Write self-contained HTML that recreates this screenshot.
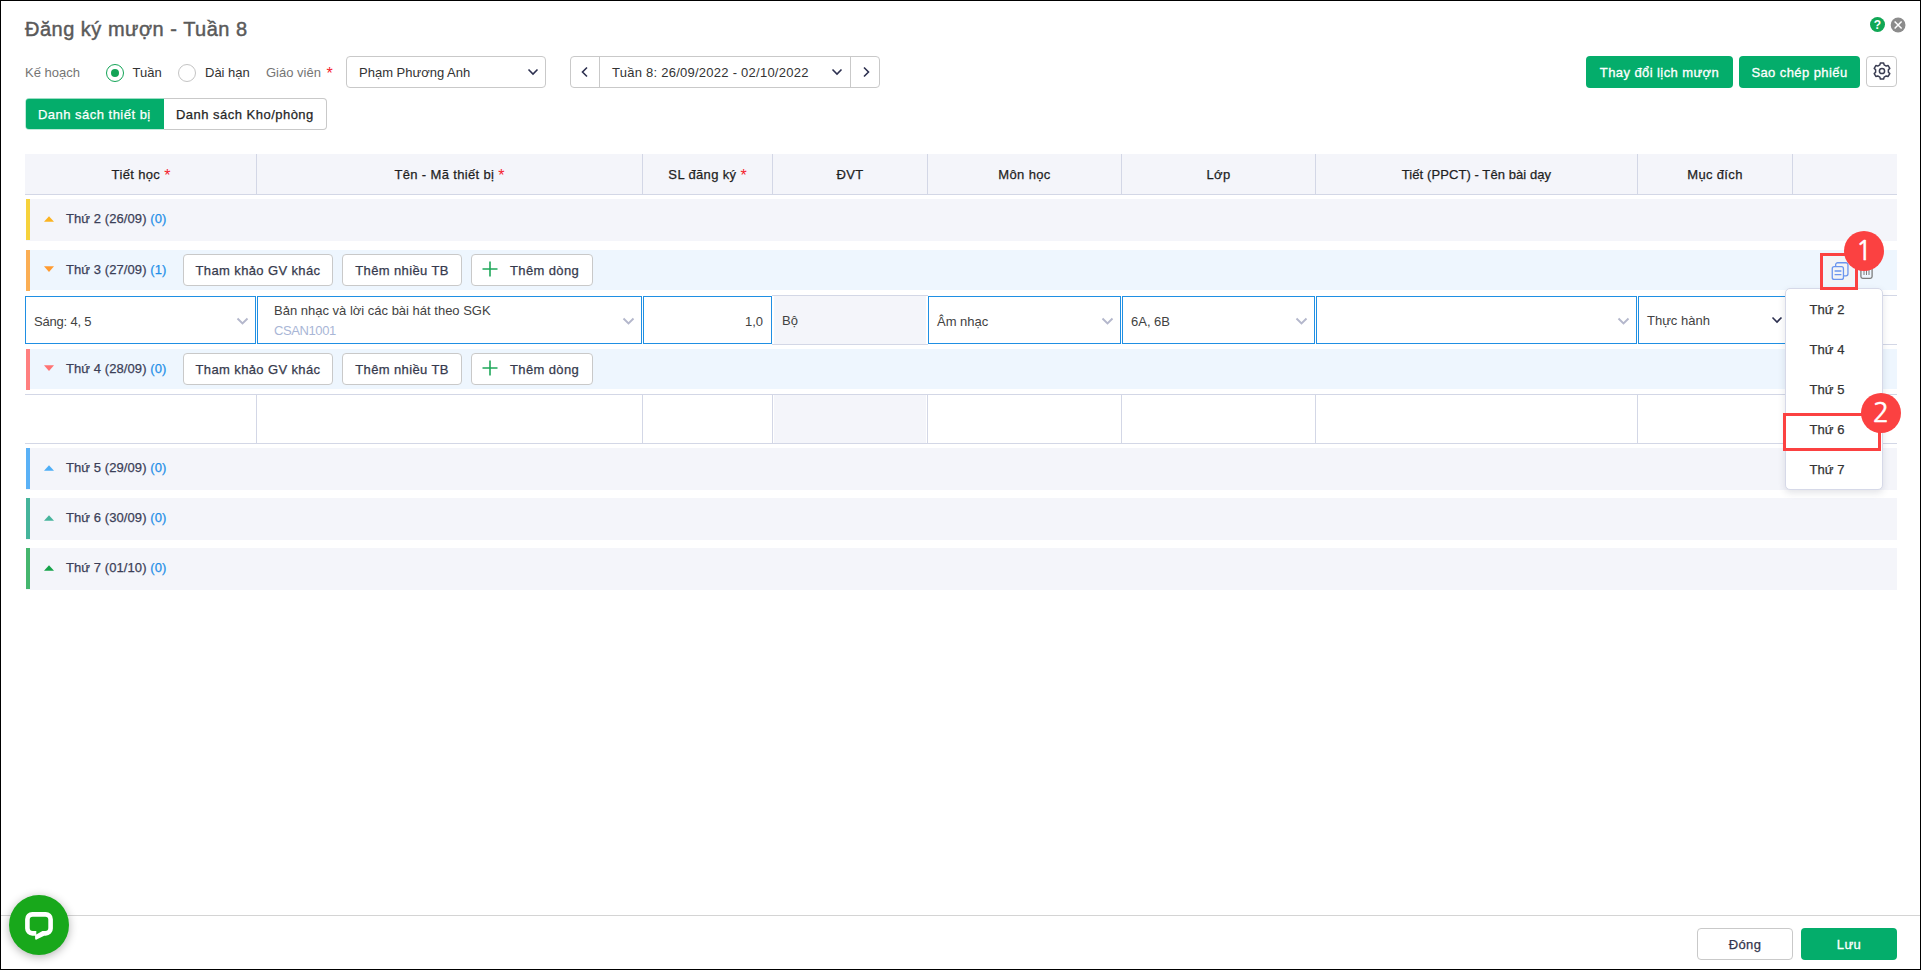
<!DOCTYPE html>
<html lang="vi">
<head>
<meta charset="utf-8">
<title>Đăng ký mượn - Tuần 8</title>
<style>
*{box-sizing:border-box;margin:0;padding:0}
html,body{width:1921px;height:970px;overflow:hidden;background:#fff}
body{position:relative;font-family:"Liberation Sans",sans-serif;font-size:13px;color:#333}
.a{position:absolute;white-space:nowrap}
.frame{left:0;top:0;width:1921px;height:970px;border:1px solid #000;z-index:50;pointer-events:none}
.b{font-weight:normal;-webkit-text-stroke:0.25px;letter-spacing:0.48px}
.g{color:#757575}
.red{color:#f5222d;font-size:16px;line-height:0;position:relative;top:2px;letter-spacing:0;-webkit-text-stroke:0}
.t{line-height:20px;height:20px}
.title{left:25px;top:17px;font-size:20px;line-height:24px;font-weight:normal;letter-spacing:0.5px;-webkit-text-stroke:0.45px #5a5a5a;color:#5a5a5a}
.box{border:1px solid #c9c9c9;border-radius:4px;background:#fff}
.gbtn{background:#04ad6b;border-radius:4px;color:#fff;font-weight:normal;-webkit-text-stroke:0.3px;letter-spacing:0.42px;text-align:center;height:32px;line-height:33px;top:56px}
.hd{top:154px;height:41px;background:#f4f5fa;border-bottom:1px solid #d3d7e6;left:25px;width:1872px}
.vl{width:1px;background:#d3d7e6}
.ht{top:165px;font-weight:normal;-webkit-text-stroke:0.25px;letter-spacing:0.35px;text-align:center;color:#1f1f1f}
.grp{left:26px;width:1871px;height:42px;background:#f4f5fa}
.grp.open{background:#eef6fe;height:40px}
.bar{left:0;top:0;width:4px;height:41px}
.gt{left:40px;top:10px;font-weight:normal;-webkit-text-stroke:0.25px;letter-spacing:0.08px;color:#3b3f58}
.gt i{font-style:normal;color:#1f8fe8}
.tri{left:18px;width:0;height:0;border-left:5px solid transparent;border-right:5px solid transparent}
.up{top:17px;border-bottom:5.5px solid #000}
.dn{top:17px;border-top:6px solid #000}
.wbtn{top:4px;height:32px;line-height:30px;padding-top:1px;border:1px solid #c9c9c9;border-radius:4px;background:#fff;font-weight:normal;-webkit-text-stroke:0.25px;letter-spacing:0.38px;color:#363a4d;text-align:center}
.cell{top:296px;height:48px;border:1px solid #1f8fe3;background:#fff}
.ct{top:15px;color:#424242}
.hl{height:1px;background:#d3d7e6}
.mi{left:0;width:95px;height:40px;line-height:42px;font-weight:normal;-webkit-text-stroke:0.25px;letter-spacing:0.06px;color:#333;padding-left:23.5px}
.rc{border:3px solid #fb4141}
.rn{width:40px;height:40px;border-radius:50%;background:#fb4141;color:#fff;text-align:center;font-family:"NanumGothic","Liberation Sans",sans-serif;font-size:27px;line-height:40px;-webkit-text-stroke:0.5px #fff}
</style>
</head>
<body>
<!-- header -->
<div class="a title">Đăng ký mượn - Tuần 8</div>
<div class="a" style="left:1870px;top:17px;width:15px;height:15px;border-radius:50%;background:#10a755;color:#fff;font-weight:bold;font-size:12px;line-height:16.5px;text-align:center">?</div>
<svg class="a" style="left:1889px;top:16px" width="18" height="18" viewBox="0 0 18 18"><circle cx="9.1" cy="9" r="7.4" fill="#8c8c8c"/><path d="M5.6 5.5 L12.6 12.5 M12.6 5.5 L5.6 12.5" stroke="#fff" stroke-width="1.5" fill="none"/></svg>

<!-- toolbar -->
<div class="a t g" style="left:25px;top:63px">Kế hoạch</div>
<div class="a" style="left:106px;top:64px;width:18px;height:18px;border-radius:50%;border:1px solid #13a456;background:#fff"></div>
<div class="a" style="left:111px;top:69px;width:8px;height:8px;border-radius:50%;background:#13a456"></div>
<div class="a t" style="left:132.5px;top:63px">Tuần</div>
<div class="a" style="left:178px;top:64px;width:18px;height:18px;border-radius:50%;border:1px solid #c4c4c4;background:#fff"></div>
<div class="a t" style="left:205px;top:63px">Dài hạn</div>
<div class="a t g" style="left:266px;top:63px">Giáo viên <span class="red" style="margin-left:2px">*</span></div>
<div class="a box" style="left:346px;top:56px;width:200px;height:32px"></div>
<div class="a t" style="left:359px;top:63px">Phạm Phương Anh</div>
<svg class="a" style="left:527px;top:67px" width="12" height="10" viewBox="0 0 12 10"><path d="M1.5 2.5 L6 7 L10.5 2.5" stroke="#2d3050" stroke-width="1.6" fill="none"/></svg>

<div class="a box" style="left:570px;top:56px;width:310px;height:32px"></div>
<div class="a vl" style="left:599px;top:57px;height:30px;background:#c9c9c9"></div>
<div class="a vl" style="left:850px;top:57px;height:30px;background:#c9c9c9"></div>
<svg class="a" style="left:580px;top:66px" width="10" height="12" viewBox="0 0 10 12"><path d="M7 1.5 L2.5 6 L7 10.5" stroke="#2d3050" stroke-width="1.6" fill="none"/></svg>
<div class="a t" style="left:612px;top:63px;letter-spacing:0.25px">Tuần 8: 26/09/2022 - 02/10/2022</div>
<svg class="a" style="left:831px;top:67px" width="12" height="10" viewBox="0 0 12 10"><path d="M1.5 2.5 L6 7 L10.5 2.5" stroke="#2d3050" stroke-width="1.6" fill="none"/></svg>
<svg class="a" style="left:861px;top:66px" width="10" height="12" viewBox="0 0 10 12"><path d="M3 1.5 L7.5 6 L3 10.5" stroke="#2d3050" stroke-width="1.6" fill="none"/></svg>

<div class="a gbtn" style="left:1586px;width:147px">Thay đổi lịch mượn</div>
<div class="a gbtn" style="left:1739px;width:121px">Sao chép phiếu</div>
<div class="a box" style="left:1866px;top:56px;width:31px;height:31px"></div>
<svg class="a" style="left:1872px;top:61px" width="20" height="20" viewBox="0 0 20 20" fill="none" stroke="#3a3d52" stroke-width="1.5" stroke-linejoin="round"><path d="M12.12 3.85 L11.63 1.96 L8.37 1.96 L7.88 3.85 L5.74 5.09 L3.86 4.57 L2.22 7.40 L3.62 8.76 L3.62 11.24 L2.22 12.60 L3.86 15.43 L5.74 14.91 L7.88 16.15 L8.37 18.04 L11.63 18.04 L12.12 16.15 L14.26 14.91 L16.14 15.43 L17.78 12.60 L16.38 11.24 L16.38 8.76 L17.78 7.40 L16.14 4.57 L14.26 5.09 Z"/><circle cx="10" cy="10" r="2.6"/></svg>

<!-- tabs -->
<div class="a box" style="left:164px;top:98px;width:163px;height:32px;border-left:none;border-radius:0 4px 4px 0"></div>
<div class="a" style="left:26px;top:99px;width:138px;height:30px;background:#04ad6b;border-radius:3px 0 0 3px;box-shadow:-1px 0 0 0 rgba(4,173,107,.25),0 -1px 0 0 rgba(4,173,107,.4),0 1px 0 0 rgba(4,173,107,.25)"></div>
<div class="a t b" style="left:38px;top:105px;color:#fff">Danh sách thiết bị</div>
<div class="a t b" style="left:176px;top:105px;color:#262626">Danh sách Kho/phòng</div>

<!-- table header -->
<div class="a hd"></div>
<div class="a vl" style="left:256px;top:154px;height:40px"></div>
<div class="a vl" style="left:642px;top:154px;height:40px"></div>
<div class="a vl" style="left:772px;top:154px;height:40px"></div>
<div class="a vl" style="left:927px;top:154px;height:40px"></div>
<div class="a vl" style="left:1121px;top:154px;height:40px"></div>
<div class="a vl" style="left:1315px;top:154px;height:40px"></div>
<div class="a vl" style="left:1637px;top:154px;height:40px"></div>
<div class="a vl" style="left:1792px;top:154px;height:40px"></div>
<div class="a t ht" style="left:25px;width:232px">Tiết học <span class="red">*</span></div>
<div class="a t ht" style="left:257px;width:385px">Tên - Mã thiết bị <span class="red">*</span></div>
<div class="a t ht" style="left:643px;width:129px">SL đăng ký <span class="red">*</span></div>
<div class="a t ht" style="left:773px;width:154px">ĐVT</div>
<div class="a t ht" style="left:928px;width:193px">Môn học</div>
<div class="a t ht" style="left:1122px;width:193px">Lớp</div>
<div class="a t ht" style="left:1316px;width:321px;letter-spacing:0.08px">Tiết (PPCT) - Tên bài dạy</div>
<div class="a t ht" style="left:1638px;width:154px">Mục đích</div>

<!-- Thu 2 -->
<div class="a grp" style="top:199px"><div class="a bar" style="background:#f6d23b"></div><svg class="a" style="left:18px;top:16.5px" width="10" height="6" viewBox="0 0 10 6"><polygon points="0,5.8 5,0.2 10,5.8" fill="#fbb320"/></svg><div class="a t gt">Thứ 2 (26/09) <i>(0)</i></div></div>

<!-- Thu 3 -->
<div class="a grp open" style="top:250px"><div class="a bar" style="background:#fbae54"></div><svg class="a" style="left:18px;top:16px" width="10" height="6" viewBox="0 0 10 6"><polygon points="0,0.2 10,0.2 5,5.9" fill="#ff9b30"/></svg><div class="a t gt">Thứ 3 (27/09) <i>(1)</i></div>
<div class="a wbtn" style="left:157px;width:150px">Tham khảo GV khác</div>
<div class="a wbtn" style="left:316px;width:120px">Thêm nhiều TB</div>
<div class="a wbtn" style="left:445px;width:122px;text-align:left;padding-left:38px">Thêm dòng</div>
<svg class="a" style="left:456px;top:11px" width="16" height="16" viewBox="0 0 16 16"><path d="M8 0.5 V15.5 M0.5 8 H15.5" stroke="#1fa85a" stroke-width="1.6"/></svg>
</div>

<!-- data row -->
<div class="a hl" style="left:772px;top:295px;width:156px"></div>
<div class="a hl" style="left:772px;top:344px;width:156px"></div>
<div class="a hl" style="left:1792px;top:295px;width:105px"></div>
<div class="a hl" style="left:1792px;top:344px;width:105px"></div>
<div class="a cell" style="left:25px;width:231px"><div class="a t ct" style="left:8px;letter-spacing:-0.2px">Sáng: 4, 5</div></div>
<div class="a cell" style="left:257px;width:385px"><div class="a t" style="left:16px;top:4px;color:#424242">Bản nhạc và lời các bài hát theo SGK</div><div class="a t" style="left:16px;top:24px;color:#a9b6d6;letter-spacing:-0.4px">CSAN1001</div></div>
<div class="a cell" style="left:643px;width:129px"><div class="a t ct" style="right:8px">1,0</div></div>
<div class="a" style="left:774px;top:296px;width:152px;height:48px;background:#f4f5fa"><div class="a t" style="left:8px;top:15px;color:#424242">Bộ</div></div>
<div class="a cell" style="left:928px;width:193px"><div class="a t ct" style="left:8px">Âm nhạc</div></div>
<div class="a cell" style="left:1122px;width:193px"><div class="a t ct" style="left:8px">6A, 6B</div></div>
<div class="a cell" style="left:1316px;width:321px"></div>
<div class="a cell" style="left:1638px;width:154px"><div class="a t ct" style="left:8px;top:14px">Thực hành</div></div>
<svg class="a chv" style="left:236px;top:316px" width="13" height="10" viewBox="0 0 13 10"><path d="M1.5 2.5 L6.5 7.5 L11.5 2.5" stroke="#b4b7cc" stroke-width="1.9" fill="none"/></svg>
<svg class="a chv" style="left:622px;top:316px" width="13" height="10" viewBox="0 0 13 10"><path d="M1.5 2.5 L6.5 7.5 L11.5 2.5" stroke="#b4b7cc" stroke-width="1.9" fill="none"/></svg>
<svg class="a chv" style="left:1101px;top:316px" width="13" height="10" viewBox="0 0 13 10"><path d="M1.5 2.5 L6.5 7.5 L11.5 2.5" stroke="#b4b7cc" stroke-width="1.9" fill="none"/></svg>
<svg class="a chv" style="left:1295px;top:316px" width="13" height="10" viewBox="0 0 13 10"><path d="M1.5 2.5 L6.5 7.5 L11.5 2.5" stroke="#b4b7cc" stroke-width="1.9" fill="none"/></svg>
<svg class="a chv" style="left:1617px;top:316px" width="13" height="10" viewBox="0 0 13 10"><path d="M1.5 2.5 L6.5 7.5 L11.5 2.5" stroke="#b4b7cc" stroke-width="1.9" fill="none"/></svg>
<svg class="a chv" style="left:1771px;top:315px" width="12" height="10" viewBox="0 0 12 10"><path d="M1.5 2.5 L6 7 L10.5 2.5" stroke="#2d3050" stroke-width="1.6" fill="none"/></svg>

<!-- Thu 4 -->
<div class="a grp open" style="top:349px"><div class="a bar" style="background:#ff7f7f"></div><svg class="a" style="left:18px;top:16px" width="10" height="6" viewBox="0 0 10 6"><polygon points="0,0.2 10,0.2 5,5.9" fill="#ff7373"/></svg><div class="a t gt">Thứ 4 (28/09) <i>(0)</i></div>
<div class="a wbtn" style="left:157px;width:150px">Tham khảo GV khác</div>
<div class="a wbtn" style="left:316px;width:120px">Thêm nhiều TB</div>
<div class="a wbtn" style="left:445px;width:122px;text-align:left;padding-left:38px">Thêm dòng</div>
<svg class="a" style="left:456px;top:11px" width="16" height="16" viewBox="0 0 16 16"><path d="M8 0.5 V15.5 M0.5 8 H15.5" stroke="#1fa85a" stroke-width="1.6"/></svg>
</div>

<!-- empty row -->
<div class="a" style="left:774px;top:395px;width:152px;height:48px;background:#f4f5fa"></div>
<div class="a hl" style="left:25px;top:394px;width:1872px"></div>
<div class="a hl" style="left:25px;top:443px;width:1872px"></div>
<div class="a vl" style="left:256px;top:395px;height:48px"></div>
<div class="a vl" style="left:642px;top:395px;height:48px"></div>
<div class="a vl" style="left:772px;top:395px;height:48px"></div>
<div class="a vl" style="left:927px;top:395px;height:48px"></div>
<div class="a vl" style="left:1121px;top:395px;height:48px"></div>
<div class="a vl" style="left:1315px;top:395px;height:48px"></div>
<div class="a vl" style="left:1637px;top:395px;height:48px"></div>
<div class="a vl" style="left:1792px;top:395px;height:48px"></div>

<!-- Thu 5-7 -->
<div class="a grp" style="top:448px"><div class="a bar" style="background:#5ab1f6"></div><svg class="a" style="left:18px;top:16.5px" width="10" height="6" viewBox="0 0 10 6"><polygon points="0,5.8 5,0.2 10,5.8" fill="#4eaef6"/></svg><div class="a t gt">Thứ 5 (29/09) <i>(0)</i></div></div>
<div class="a grp" style="top:498px"><div class="a bar" style="background:#45b49b"></div><svg class="a" style="left:18px;top:16.5px" width="10" height="6" viewBox="0 0 10 6"><polygon points="0,5.8 5,0.2 10,5.8" fill="#47b49c"/></svg><div class="a t gt">Thứ 6 (30/09) <i>(0)</i></div></div>
<div class="a grp" style="top:548px"><div class="a bar" style="background:#45b66e"></div><svg class="a" style="left:18px;top:16.5px" width="10" height="6" viewBox="0 0 10 6"><polygon points="0,5.8 5,0.2 10,5.8" fill="#16a34a"/></svg><div class="a t gt">Thứ 7 (01/10) <i>(0)</i></div></div>

<!-- row actions -->
<div class="a" style="left:1825px;top:257px;width:28px;height:26px;border-radius:4px;background:#f3f4f6"></div>
<svg class="a" style="left:1830px;top:261px" width="20" height="20" viewBox="0 0 20 20" fill="none" stroke="#6b95ee" stroke-width="1.3"><path d="M5.65 5.2 V3.75 A2 2 0 0 1 7.65 1.75 H15.95 A2 2 0 0 1 17.95 3.75 V12.85 A2 2 0 0 1 15.95 14.85 H14"/><rect x="2.25" y="5.65" width="11.2" height="12.8" rx="2"/><path d="M4.6 10 H11.4 M4.6 13.6 H11.4"/></svg>
<svg class="a" style="left:1859.5px;top:262px" width="13" height="18" viewBox="0 0 13 18" fill="none" stroke="#7d7d7d" stroke-width="1.3"><path d="M0.9 2 V14.6 A1.8 1.8 0 0 0 2.7 16.4 H10.3 A1.8 1.8 0 0 0 12.1 14.6 V2"/><path d="M4 6 V13 M6.5 6 V13 M9 6 V13" stroke-width="1"/></svg>

<!-- dropdown -->
<div class="a" style="left:1785px;top:288px;width:98px;height:202px;background:#fff;border:1px solid #d6d9e8;border-radius:5px;box-shadow:0 3px 7px rgba(40,45,80,.13)">
<div class="a mi" style="top:0">Thứ 2</div>
<div class="a mi" style="top:40px">Thứ 4</div>
<div class="a mi" style="top:80px">Thứ 5</div>
<div class="a mi" style="top:120px">Thứ 6</div>
<div class="a mi" style="top:160px">Thứ 7</div>
</div>

<!-- annotations -->
<div class="a rc" style="left:1820px;top:253px;width:38px;height:37px"></div>
<div class="a rn" style="left:1844px;top:231px">1</div>
<div class="a rc" style="left:1783px;top:413px;width:98px;height:38px"></div>
<div class="a rn" style="left:1861px;top:393px">2</div>

<!-- footer -->
<div class="a" style="left:1px;top:915px;width:1919px;height:1px;background:#d4d4d4"></div>
<div class="a box" style="left:1697px;top:928px;width:96px;height:32px;text-align:center;line-height:32px;font-weight:normal;-webkit-text-stroke:0.25px;letter-spacing:0.35px;color:#33364d">Đóng</div>
<div class="a gbtn" style="left:1801px;top:928px;width:96px;line-height:34px">Lưu</div>

<!-- chat -->
<div class="a" style="left:9px;top:895px;width:60px;height:60px;border-radius:50%;background:#18a81b;box-shadow:0 2px 10px rgba(0,0,0,.3)"></div>
<svg class="a" style="left:24px;top:910px" width="30" height="32" viewBox="0 0 30 32"><path fill="#fff" fill-rule="evenodd" d="M8.3 2 H21.7 A7.2 7.2 0 0 1 28.9 9.2 V18.5 A7.2 7.2 0 0 1 21.7 25.7 H20.2 L12.6 29.5 Q11.1 30.1 11.1 28.6 V25.7 H8.3 A7.2 7.2 0 0 1 1.1 18.5 V9.2 A7.2 7.2 0 0 1 8.3 2 Z M8.7 6.7 A3 3 0 0 0 5.7 9.7 V18.05 A3 3 0 0 0 8.7 21.05 H12.3 V24.4 L18.4 21.05 H21.3 A3 3 0 0 0 24.3 18.05 V9.7 A3 3 0 0 0 21.3 6.7 Z"/></svg>

<div class="a frame"></div>
</body>
</html>
